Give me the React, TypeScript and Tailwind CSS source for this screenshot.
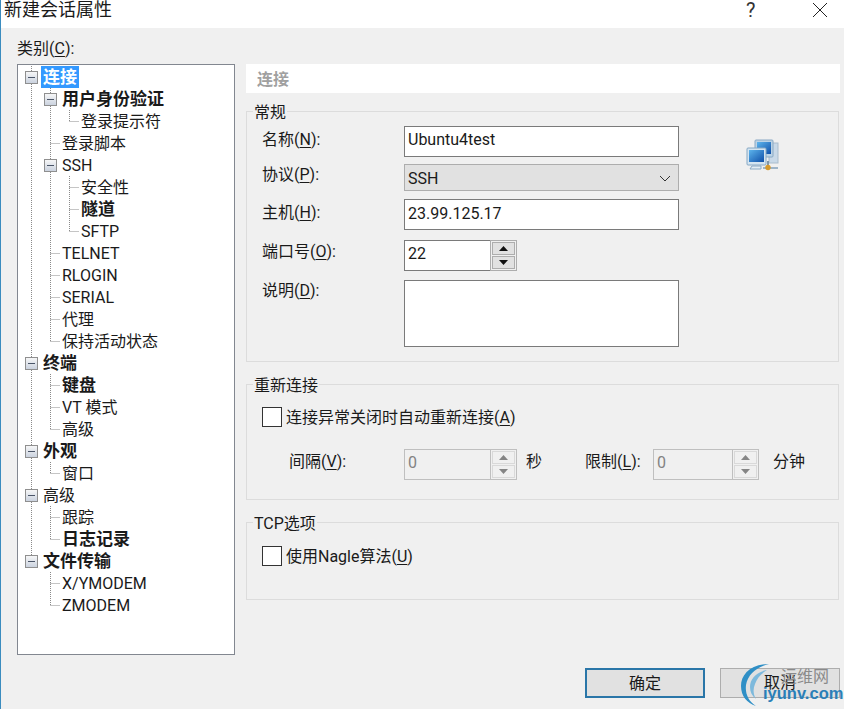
type Cell = " " | "|" | "T" | "L" | "B" | "E";

type TreeItem = {
  label: string;
  cells: Cell[];
  bold?: boolean;
  selected?: boolean;
};

const TREE: TreeItem[] = [
  { label: "连接", cells: ["B"], bold: true, selected: true },
  { label: "用户身份验证", cells: ["|", "B"], bold: true },
  { label: "登录提示符", cells: ["|", "|", "L"] },
  { label: "登录脚本", cells: ["|", "T"] },
  { label: "SSH", cells: ["|", "B"] },
  { label: "安全性", cells: ["|", "|", "T"] },
  { label: "隧道", cells: ["|", "|", "T"], bold: true },
  { label: "SFTP", cells: ["|", "|", "L"] },
  { label: "TELNET", cells: ["|", "T"] },
  { label: "RLOGIN", cells: ["|", "T"] },
  { label: "SERIAL", cells: ["|", "T"] },
  { label: "代理", cells: ["|", "T"] },
  { label: "保持活动状态", cells: ["|", "L"] },
  { label: "终端", cells: ["B"], bold: true },
  { label: "键盘", cells: ["|", "T"], bold: true },
  { label: "VT 模式", cells: ["|", "T"] },
  { label: "高级", cells: ["|", "L"] },
  { label: "外观", cells: ["B"], bold: true },
  { label: "窗口", cells: ["|", "L"] },
  { label: "高级", cells: ["B"] },
  { label: "跟踪", cells: ["|", "T"] },
  { label: "日志记录", cells: ["|", "L"], bold: true },
  { label: "文件传输", cells: ["E"], bold: true },
  { label: "X/YMODEM", cells: [" ", "T"] },
  { label: "ZMODEM", cells: [" ", "L"] },
];

function Guide({ cell, index }: { cell: Cell; index: number }) {
  const x = index * 19 + 9.5;
  const dots = { stroke: "#8a8a8a", strokeDasharray: "1 1" };
  if (cell === " ") return null;
  if (cell === "|") return <line x1={x} x2={x} y1={0} y2={22} {...dots} />;
  if (cell === "T" || cell === "L") {
    return (
      <g>
        <line x1={x} x2={x} y1={0} y2={cell === "T" ? 22 : 11} {...dots} />
        <line x1={x} x2={x + 10} y1={11.5} y2={11.5} {...dots} />
      </g>
    );
  }
  return (
    <g>
      <line x1={x} x2={x} y1={0} y2={cell === "B" ? 22 : 5} {...dots} />
      <rect x={x - 6} y={5.5} width={12} height={12} fill="url(#box)" stroke="#8f8f8f" />
      <line x1={x - 3.5} x2={x + 3.5} y1={11.5} y2={11.5} stroke="#4a5568" />
    </g>
  );
}

function TreeRow({ item }: { item: TreeItem }) {
  const width = item.cells.length * 19;
  return (
    <div className="flex h-[22px] items-center">
      <svg width={width} height={22} className="shrink-0">
        <defs>
          <linearGradient id="box" x1="0" y1="0" x2="0" y2="1">
            <stop offset="0" stopColor="#f8f8f8" />
            <stop offset="1" stopColor="#c9d1de" />
          </linearGradient>
        </defs>
        {item.cells.map((cell, i) => (
          <Guide key={i} cell={cell} index={i} />
        ))}
      </svg>
      <span
        className={`h-[22px] whitespace-nowrap px-[2px] ${item.bold ? "text-[17px] font-bold leading-[22px]" : "text-[16px] leading-[24px]"} ${item.selected ? "bg-[#3399ff] text-white" : "text-[#1a1a1a]"}`}
      >
        {item.label}
      </span>
    </div>
  );
}

function Hotkey({ text, keyName, after = ":" }: { text: string; keyName: string; after?: string }) {
  return (
    <>
      {text}(<span className="underline underline-offset-2">{keyName}</span>){after}
    </>
  );
}

function Arrow({ up, disabled }: { up?: boolean; disabled?: boolean }) {
  return (
    <svg width={9} height={5} viewBox="0 0 9 5">
      <path d={up ? "M4.5 0 9 5H0Z" : "M0 0h9L4.5 5Z"} fill={disabled ? "#858585" : "#111"} />
    </svg>
  );
}

function Spin({ value, disabled, width }: { value: string; disabled?: boolean; width: string }) {
  return (
    <div className={`flex h-[31px] ${width}`}>
      <div
        className={`flex flex-1 items-center border-y border-l pb-[3px] pl-[3px] text-[16px] ${disabled ? "border-[#bfbfbf] bg-[#f0f0f0] text-[#838383]" : "border-[#7a7a7a] bg-white text-[#1a1a1a]"}`}
      >
        {value}
      </div>
      <div
        className={`flex w-[27px] flex-col justify-center gap-[1px] border px-[1px] ${disabled ? "border-[#bfbfbf]" : "border-[#adadad]"}`}
      >
        <div
          className={`flex h-[13px] items-center justify-center border ${disabled ? "border-[#d9d9d9] bg-[#f0f0f0]" : "border-[#adadad] bg-[#e1e1e1]"}`}
        >
          <Arrow up disabled={disabled} />
        </div>
        <div
          className={`flex h-[13px] items-center justify-center border ${disabled ? "border-[#d9d9d9] bg-[#f0f0f0]" : "border-[#adadad] bg-[#e1e1e1]"}`}
        >
          <Arrow disabled={disabled} />
        </div>
      </div>
    </div>
  );
}

function Group({ title, className, children }: { title: string; className: string; children: React.ReactNode }) {
  return (
    <fieldset className={`w-[593px] border border-[#dcdcdc] ${className}`}>
      <legend className="ml-[6px] h-[22px] px-[1px] text-[16px] leading-[26px] text-[#1a1a1a]">{title}</legend>
      {children}
    </fieldset>
  );
}

function CheckRow({ children, className }: { children: React.ReactNode; className: string }) {
  return (
    <div className={`flex h-5 items-start gap-[4px] pl-[15px] text-[16px] text-[#1a1a1a] ${className}`}>
      <div className="h-5 w-5 border border-[#333] bg-white" />
      <span className="h-5 leading-[22px]">{children}</span>
    </div>
  );
}

function NetworkIcon() {
  return (
    <svg width={33} height={33} viewBox="0 0 33 33" className="ml-[67px] mt-[13px] shrink-0">
      <defs>
        <linearGradient id="screen" x1="0" y1="0" x2="1" y2="1">
          <stop offset="0" stopColor="#5db4ec" />
          <stop offset="1" stopColor="#0f4fa8" />
        </linearGradient>
      </defs>
      <rect x="23" y="4" width="9" height="20" fill="#c9d9e8" stroke="#a9bccd" />
      <rect x="9" y="1" width="18" height="17" rx="1" fill="#bcd3e6" stroke="#8aa9c4" />
      <rect x="11" y="3" width="14" height="12" fill="url(#screen)" />
      <rect x="1" y="9" width="19" height="17" rx="1" fill="#d5e5f1" stroke="#86a8c4" />
      <rect x="3" y="11" width="15" height="12" fill="url(#screen)" />
      <path d="M6 27h9v3H4z" fill="#e3edf4" stroke="#8aa9c4" />
      <path d="M17 29h15" stroke="#9db4c8" strokeWidth="2" />
      <path d="M22 22v5" stroke="#7f97aa" strokeWidth="2" />
      <circle cx="22" cy="28.5" r="2.7" fill="#d79a2b" />
    </svg>
  );
}

function Watermark() {
  return (
    <div className="pointer-events-none absolute right-0 bottom-0 h-[48px] w-[104px]">
      <svg width={32} height={44} viewBox="0 0 32 44" className="absolute left-0 top-[2px]">
        <path d="M29 1C10 1 1 12 1 23c0 10 6 17 15 20C8 38 5 30 6 22 8 11 17 4 29 1Z" fill="#2f8fc6" />
        <path d="M27 7C16 9 10 16 10 24c0 5 2 9 6 12-3-5-3-10-1-15 2-6 6-10 12-14Z" fill="#7db9dc" />
      </svg>
      <span className="absolute left-[41px] top-[7px] text-[16px] leading-[18px] text-[#8a8a8a]">运维网</span>
      <span className="absolute left-[23px] top-[22px] font-['Liberation_Sans',sans-serif] text-[16.5px] font-bold leading-[20px] text-[#2a7fb8]">
        iyunv.com
      </span>
    </div>
  );
}

export default function App() {
  return (
    <div className="relative flex h-[709px] w-[844px] flex-col overflow-hidden border-l border-[#3b8cbf] bg-[#f0f0f0] font-['Roboto','Noto_Sans_CJK_SC',sans-serif]">
      <header className="flex h-7 shrink-0 items-start bg-white pl-[3px]">
        <span className="text-[18px] leading-[20px] text-[#1a1a1a]">新建会话属性</span>
        <span className="ml-[634px] text-[20px] leading-[20px] text-[#333]">?</span>
        <svg width={16} height={16} viewBox="0 0 16 16" className="ml-[57px] mt-[2px]">
          <path d="M1 1l14 14M15 1 1 15" stroke="#222" />
        </svg>
      </header>

      <div className="flex flex-1 pl-4">
        <div className="w-[218px] shrink-0 pt-[9px]">
          <div className="mb-[5px] h-[22px] text-[16px] leading-[24px] text-[#1a1a1a]">
            <Hotkey text="类别" keyName="C" />
          </div>
          <div className="h-[591px] border border-[#828790] bg-white pl-1 pt-px">
            {TREE.map((item, i) => (
              <TreeRow key={i} item={item} />
            ))}
          </div>
        </div>

        <div className="ml-[11px] w-[594px] pt-9">
          <div className="flex h-[29px] items-center bg-white pl-[11px] pt-[2px] text-[16px] font-bold text-[#a0a0a0]">连接</div>

          <Group title="常规" className="mt-[7px] h-[262px]">
            <div className="flex pl-[15px] pt-[4px] text-[16px] text-[#1a1a1a]">
              <div className="w-[417px] shrink-0">
                <div className="flex h-[31px] items-start">
                  <div className="mt-px h-6 w-[142px] leading-[26px]">
                    <Hotkey text="名称" keyName="N" />
                  </div>
                  <div className="flex h-[31px] flex-1 items-center border border-[#7a7a7a] bg-white pb-[3px] pl-[3px]">Ubuntu4test</div>
                </div>
                <div className="mt-[7px] flex h-[27px] items-start">
                  <div className="-mt-[2px] h-6 w-[142px] leading-[26px]">
                    <Hotkey text="协议" keyName="P" />
                  </div>
                  <div className="flex h-[27px] flex-1 items-center justify-between border border-[#adadad] bg-[#e1e1e1] pl-[3px] pr-[7px] pt-[2px]">
                    SSH
                    <svg width={12} height={7} viewBox="0 0 12 7">
                      <path d="M1 1l5 5 5-5" fill="none" stroke="#333" />
                    </svg>
                  </div>
                </div>
                <div className="mt-2 flex h-[31px] items-start">
                  <div className="mt-px h-6 w-[142px] leading-[26px]">
                    <Hotkey text="主机" keyName="H" />
                  </div>
                  <div className="flex h-[31px] flex-1 items-center border border-[#7a7a7a] bg-white pb-[1px] pl-[3px]">23.99.125.17</div>
                </div>
                <div className="mt-[10px] flex h-[31px] items-start">
                  <div className="-mt-px h-6 w-[142px] leading-[26px]">
                    <Hotkey text="端口号" keyName="O" />
                  </div>
                  <Spin value="22" width="w-[113px]" />
                </div>
                <div className="mt-[9px] flex h-[67px] items-start">
                  <div className="-mt-[2px] h-6 w-[142px] leading-[26px]">
                    <Hotkey text="说明" keyName="D" />
                  </div>
                  <div className="h-[67px] flex-1 border border-[#7a7a7a] bg-white" />
                </div>
              </div>
              <NetworkIcon />
            </div>
          </Group>

          <Group title="重新连接" className="mt-[11px] h-[127px]">
            <CheckRow className="mt-[12px]">
              连接异常关闭时自动重新连接(<span className="underline underline-offset-2">A</span>)
            </CheckRow>
            <div className="mt-[22px] flex h-[31px] items-start text-[16px] leading-[26px] text-[#1a1a1a]">
              <div className="ml-[42px] h-6 w-[115px]">
                <Hotkey text="间隔" keyName="V" />
              </div>
              <Spin value="0" disabled width="w-[113px]" />
              <div className="ml-[9px] h-6 w-[59px]">秒</div>
              <div className="h-6 w-[68px]">
                <Hotkey text="限制" keyName="L" />
              </div>
              <Spin value="0" disabled width="w-[106px]" />
              <div className="ml-[14px] h-6">分钟</div>
            </div>
          </Group>

          <Group title="TCP选项" className="mt-[11px] h-[89px]">
            <CheckRow className="mt-[13px]">
              使用Nagle算法(<span className="underline underline-offset-2">U</span>)
            </CheckRow>
          </Group>

          <div className="mt-[68px] flex justify-end gap-[15px] pr-0 text-[16px] text-[#1a1a1a]">
            <button type="button" className="h-[30px] w-[120px] border-2 border-[#2a76a8] bg-[#e1e1e1] pt-[2px]">
              确定
            </button>
            <button type="button" className="h-[30px] w-[120px] border border-[#adadad] bg-[#e1e1e1]">
              取消
            </button>
          </div>
        </div>
      </div>

      <Watermark />
    </div>
  );
}
